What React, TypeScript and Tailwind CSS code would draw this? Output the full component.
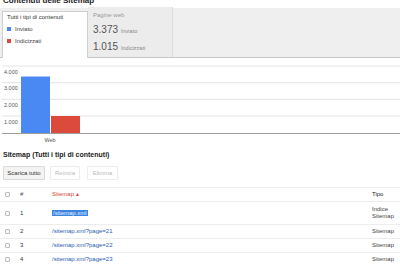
import React from "react";

interface SitemapRow {
  id: number;
  path: string;
  tipo: string[];
  selected?: boolean;
}

const rows: SitemapRow[] = [
  { id: 1, path: "/sitemap.xml", tipo: ["Indice", "Sitemap"], selected: true },
  { id: 2, path: "/sitemap.xml?page=21", tipo: ["Sitemap"] },
  { id: 3, path: "/sitemap.xml?page=22", tipo: ["Sitemap"] },
  { id: 4, path: "/sitemap.xml?page=23", tipo: ["Sitemap"] },
];

const Checkbox = () => (
  <span className="block w-[5px] h-[5px] border border-[#bdbdbd] bg-[#f7f7f7] rounded-[1px]" />
);

const Chart = () => {
  const grid = [
    { y: 8, label: "4.000" },
    { y: 24.7, label: "3.000" },
    { y: 41.3, label: "2.000" },
    { y: 58, label: "1.000" },
  ];
  return (
    <svg width="400" height="86" className="block">
      {grid.map((g) => (
        <g key={g.label}>
          <line x1="2" x2="400" y1={g.y} y2={g.y} stroke="#e4e4e4" strokeWidth="1" />
          <text x="4" y={g.y + 7.5} fontSize="5.5" fill="#555" fontFamily="Liberation Sans, Arial, sans-serif">
            {g.label}
          </text>
        </g>
      ))}
      <rect x="21" y="18.5" width="29" height="56.5" fill="#4a89f3" />
      <rect x="51" y="58" width="29" height="17" fill="#dc4a3b" />
      <line x1="2" x2="400" y1="75.5" y2="75.5" stroke="#9e9e9e" strokeWidth="1" />
      <text x="50" y="84" fontSize="5.5" fill="#555" textAnchor="middle" fontFamily="Liberation Sans, Arial, sans-serif">
        Web
      </text>
    </svg>
  );
};

export default function App() {
  return (
    <div className="w-[400px] h-[266px] overflow-hidden bg-white font-['Liberation_Sans',Arial,sans-serif] text-[#333]">
      <div className="-mt-[4px] pl-[3px] text-[8px] leading-[10px] font-bold text-[#222]">
        Contenuti delle Sitemap
      </div>

      {/* tabs */}
      <div className="mt-[2px] h-[50px] bg-[#efefef] border-b border-[#c6c6c6] flex items-end pl-[2px]">
        <div className="w-[86px] h-[47px] -mb-px bg-white border border-b-0 border-[#cfcfcf] pl-[4px] text-[6px]">
          <div className="leading-[10px] text-[#333]">Tutti i tipi di contenuti</div>
          <div className="mt-[1px] leading-[12px] flex items-center gap-[4px] text-[#444]">
            <span className="w-[4px] h-[4px] bg-[#4a89f3]" />
            Inviato
          </div>
          <div className="leading-[12px] flex items-center gap-[4px] text-[#444]">
            <span className="w-[4px] h-[4px] bg-[#dc4a3b]" />
            Indicizzati
          </div>
        </div>
        <div className="w-[85px] h-[50px] bg-[#ececec] border-r border-[#dcdcdc] pl-[5px] pt-[3px]">
          <div className="text-[6px] leading-[10px] text-[#999]">Pagine web</div>
          <div className="mt-[2px] leading-[15px] flex items-baseline gap-[3px]">
            <span className="text-[10px] text-[#555]">3.373</span>
            <span className="text-[5.5px] text-[#888]">Inviato</span>
          </div>
          <div className="leading-[15px] flex items-baseline gap-[3px]">
            <span className="text-[10px] text-[#555]">1.015</span>
            <span className="text-[5.5px] text-[#888]">Indicizzati</span>
          </div>
        </div>
      </div>

      <Chart />

      <div className="mt-[6px] pl-[3px] text-[7px] leading-[10px] font-bold text-[#222]">
        Sitemap (Tutti i tipi di contenuti)
      </div>

      {/* buttons */}
      <div className="mt-[6px] pl-[3px] flex text-[6px]">
        <div className="w-[42px] h-[14px] flex items-center justify-center bg-[#f3f3f3] border border-[#d9d9d9] rounded-[1px] text-[#333]">
          Scarica tutto
        </div>
        <div className="ml-[5px] w-[30px] h-[14px] flex items-center justify-center border border-[#ececec] rounded-[1px] text-[#bbb]">
          Reinvia
        </div>
        <div className="ml-[7px] w-[31px] h-[14px] flex items-center justify-center border border-[#ececec] rounded-[1px] text-[#bbb]">
          Elimina
        </div>
      </div>

      {/* table */}
      <div className="mt-[7px] border-t border-[#ededed] text-[6px]">
        <div className="grid grid-cols-[18px_34px_1fr_30px] h-[14px] items-center border-b border-[#ededed]">
          <div className="pl-[5px]">
            <Checkbox />
          </div>
          <div className="pl-[2px] text-[#555]">#</div>
          <div className="text-[#d14836]">Sitemap ▴</div>
          <div className="pl-[2px] text-[#222]">Tipo</div>
        </div>
        {rows.map((r) => (
          <div
            key={r.id}
            className={`grid grid-cols-[18px_34px_1fr_30px] items-center border-b border-[#ededed] ${
              r.tipo.length > 1 ? "h-[23px]" : "h-[14px]"
            }`}
          >
            <div className="pl-[5px]">
              <Checkbox />
            </div>
            <div className="pl-[2px] text-[#333]">{r.id}</div>
            <div>
              {r.selected ? (
                <span className="bg-[#3b84df] text-[#e8f0ff] px-[1px]">{r.path}</span>
              ) : (
                <span className="text-[#2a5db0]">{r.path}</span>
              )}
            </div>
            <div className="pl-[2px] leading-[7px] text-[#444]">
              {r.tipo.map((t) => (
                <div key={t}>{t}</div>
              ))}
            </div>
          </div>
        ))}
      </div>
    </div>
  );
}
